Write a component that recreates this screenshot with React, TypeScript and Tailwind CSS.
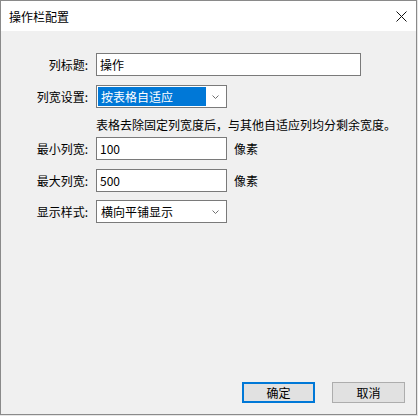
import React from "react";

const font = "font-['Noto_Sans_CJK_SC','Noto_Sans_CJK_JP',sans-serif]";

function Chevron() {
  return (
    <svg width="7" height="4" viewBox="0 0 7 4" className="block">
      <polyline points="0.5,0.5 3.5,3.5 6.5,0.5" fill="none" stroke="#707070" strokeWidth="1" />
    </svg>
  );
}

function Label({ text }: { text: string }) {
  return <div className="w-[87px] text-right shrink-0">{text}</div>;
}

function TextBox({ value, width }: { value: string; width: string }) {
  return (
    <div className={`${width} h-[23px] border border-[#7a7a7a] bg-white flex items-center pl-[3px]`}>
      {value}
    </div>
  );
}

function Select({ value, active }: { value: string; active?: boolean }) {
  return (
    <div className="w-[131px] h-[23px] border border-[#7a7a7a] bg-white flex p-[1px]">
      <div
        className={
          active
            ? "flex-1 h-[19px] bg-[#0078d7] text-white flex items-center pl-[3px]"
            : "flex-1 h-[19px] flex items-center pl-[3px]"
        }
      >
        {value}
      </div>
      <div className="w-[19px] flex items-center justify-center">
        <Chevron />
      </div>
    </div>
  );
}

export default function App() {
  return (
    <div className={`w-[418px] h-[416px] bg-[#e6e6e6] ${font} text-[12px] leading-[16px] text-black`}>
      <div className="w-[417px] h-[415px] border border-[#8a8a8a] flex flex-col">
        {/* title bar */}
        <div className="h-[30px] bg-white flex items-center justify-between pl-[8px] pr-[8px] shrink-0">
          <span className="mt-[1px]">操作栏配置</span>
          <svg width="11" height="11" viewBox="0 0 11 11" className="mr-[1px] mt-[1px]">
            <path d="M0.5 0.5 L10.5 10.5 M10.5 0.5 L0.5 10.5" stroke="#111" strokeWidth="1" />
          </svg>
        </div>

        {/* body */}
        <div className="flex-1 bg-[#f0f0f0] flex flex-col pt-[22px]">
          <div className="flex items-center">
            <Label text="列标题:" />
            <div className="ml-[8px]">
              <TextBox value="操作" width="w-[265px]" />
            </div>
          </div>

          <div className="flex items-center mt-[9px]">
            <Label text="列宽设置:" />
            <div className="ml-[8px]">
              <Select value="按表格自适应" active />
            </div>
          </div>

          <div className="ml-[95px] mt-[9px]">表格去除固定列宽度后，与其他自适应列均分剩余宽度。</div>

          <div className="flex items-center mt-[4px]">
            <Label text="最小列宽:" />
            <div className="ml-[8px]">
              <TextBox value="100" width="w-[131px]" />
            </div>
            <span className="ml-[7px]">像素</span>
          </div>

          <div className="flex items-center mt-[9px]">
            <Label text="最大列宽:" />
            <div className="ml-[8px]">
              <TextBox value="500" width="w-[131px]" />
            </div>
            <span className="ml-[7px]">像素</span>
          </div>

          <div className="flex items-center mt-[8px]">
            <Label text="显示样式:" />
            <div className="ml-[8px]">
              <Select value="横向平铺显示" />
            </div>
          </div>

          <div className="flex-1" />

          {/* buttons */}
          <div className="flex justify-end gap-[17px] pr-[11px] pb-[11px]">
            <button className="w-[73px] h-[21px] border-2 border-[#0078d7] bg-[#e1e1e1] flex items-center justify-center">
              确定
            </button>
            <button className="w-[73px] h-[21px] border border-[#adadad] bg-[#e1e1e1] flex items-center justify-center">
              取消
            </button>
          </div>
        </div>
      </div>
    </div>
  );
}
